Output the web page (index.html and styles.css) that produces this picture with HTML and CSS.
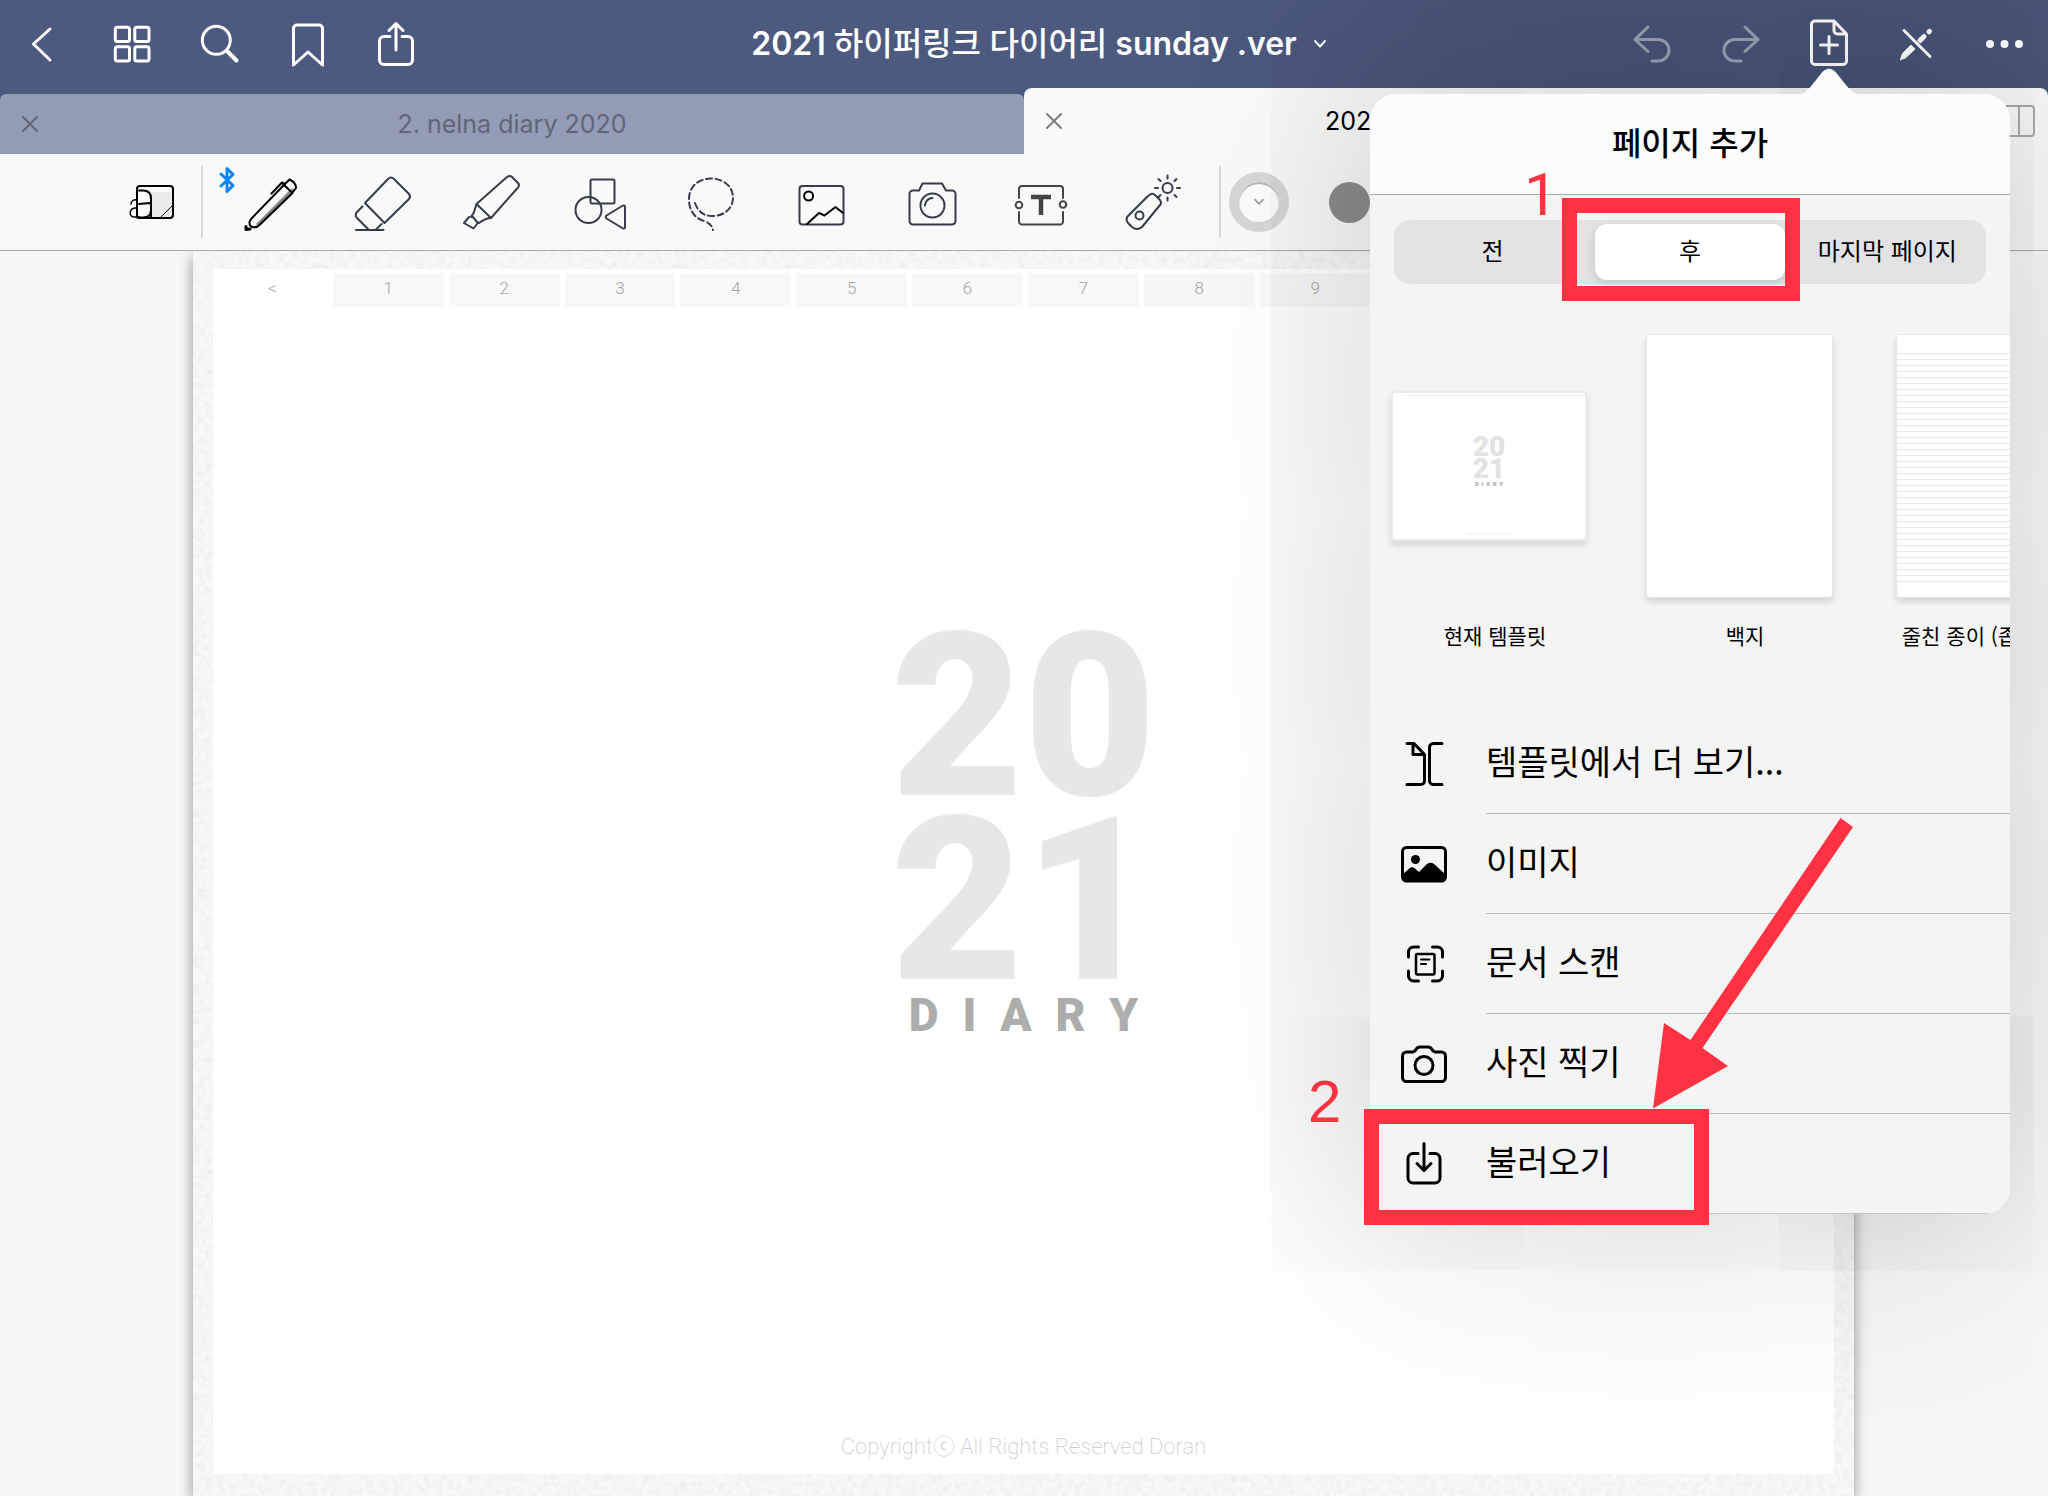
FILE: index.html
```
<!DOCTYPE html>
<html lang="ko">
<head>
<meta charset="utf-8">
<meta name="viewport" content="width=device-width, initial-scale=1">
<title>2021 하이퍼링크 다이어리 sunday .ver</title>
<link rel="stylesheet" href="styles.css">
</head>
<body>
<header class="navbar">
  <div class="nav-group">
    <button class="nav-btn" aria-label="뒤로"><svg viewBox="0 0 56 56"><path d="M34 13 17.500 28 34 44" stroke-width="3"/></svg></button>
    <button class="nav-btn" aria-label="썸네일"><svg viewBox="0 0 56 56"><rect x="11.300" y="11.300" width="14.200" height="14.200" rx="2"/><rect x="30.800" y="11.300" width="14.200" height="14.200" rx="2"/><rect x="11.300" y="30.800" width="14.200" height="14.200" rx="2"/><rect x="30.800" y="30.800" width="14.200" height="14.200" rx="2"/></svg></button>
    <button class="nav-btn" aria-label="검색"><svg viewBox="0 0 56 56"><circle cx="24.300" cy="24.300" r="14"/><path d="M35 35 44.500 44.500" stroke-width="4"/></svg></button>
    <button class="nav-btn" aria-label="북마크"><svg viewBox="0 0 56 56"><path d="M13.500 49V12.500a3.500 3.500 0 0 1 3.500-3.500H39a3.500 3.500 0 0 1 3.500 3.500V49L28 36z"/></svg></button>
    <button class="nav-btn" aria-label="공유"><svg viewBox="0 0 56 56"><path d="M22 20.500H16a4.500 4.500 0 0 0-4.500 4.500V44a4.500 4.500 0 0 0 4.500 4.500H40a4.500 4.500 0 0 0 4.500-4.500V25a4.500 4.500 0 0 0-4.500-4.500H34M28 34V7.500M21 14.500 28 7.500 35 14.500"/></svg></button>
  </div>
  <button class="doc-title"><span>2021 <span class="ko">하이퍼링크 다이어리</span> sunday .ver</span><svg viewBox="0 0 14 10"><path d="M2 2 7 7.500 12 2"/></svg></button>
  <div class="nav-group">
    <button class="nav-btn dim" aria-label="실행 취소"><svg viewBox="0 0 56 56"><path d="M24 11 11 23.500 24 35.500M11 23.500H34a11 10.700 0 0 1 0 21.500H28"/></svg></button>
    <button class="nav-btn dim" aria-label="다시 실행"><svg viewBox="0 0 56 56"><path d="M33 11 46 23.500 33 35.500M46 23.500H23a11 10.700 0 0 0 0 21.500H29"/></svg></button>
    <button class="nav-btn" aria-label="페이지 추가"><svg viewBox="0 0 56 56"><path d="M34 5H15a3.500 3.500 0 0 0-3.500 3.500V45a3.500 3.500 0 0 0 3.500 3.500H43a3.500 3.500 0 0 0 3.500-3.500V18zM34 5.500V14.500a3.500 3.500 0 0 0 3.500 3.500H46M29 20.500V37.500M20.500 29H37.500"/></svg></button>
    <button class="nav-btn" aria-label="읽기 전용"><svg viewBox="0 0 56 56"><path d="M16 14.500 42 40.500" stroke-width="3"/><path d="M32 24.500 36 20.500M41 15.800 41.500 15.300" stroke-width="5"/><path d="M12.500 43.500 14.500 37.500 23 29 27 33 18 41.500z" fill="currentColor" stroke-width="1"/></svg></button>
    <button class="nav-btn" aria-label="더 보기"><svg viewBox="0 0 56 56"><g fill="currentColor" stroke="none"><circle cx="14" cy="28" r="4"/><circle cx="28.500" cy="28" r="4"/><circle cx="43" cy="28" r="4"/></g></svg></button>
  </div>
</header>

<nav class="doc-tabs">
  <div class="doc-tab">
    <button class="tab-close" aria-label="닫기"><svg viewBox="0 0 16 16"><path d="M1 1 15 15M15 1 1 15"/></svg></button>
    <a class="tab-name" href="#">2. nelna diary 2020</a>
  </div>
  <div class="doc-tab active">
    <button class="tab-close" aria-label="닫기"><svg viewBox="0 0 16 16"><path d="M1 1 15 15M15 1 1 15"/></svg></button>
    <a class="tab-name" href="#">2021 하이퍼링크 다이어리 sunday .ver</a>
    <button class="tab-split" aria-label="분할"><svg viewBox="0 0 44 32"><rect x="1" y="1" width="42" height="30" rx="3"/><path d="M28 1V31"/></svg></button>
  </div>
</nav>

<div class="toolbar">
  <button class="tool tool-view ink" aria-label="읽기 모드"><svg viewBox="0 0 64 64"><path d="M30 22H53V48H30z" fill="#ebebeb" stroke="none"/><rect x="17" y="16" width="36" height="32" rx="3"/><path d="M19 20.500H23c5 0 8 3 8 8V40c0 5-3 7.500-8 7.500H17M19 34 30 33M31 28V48"/><path d="M11 34c0-3 3-5 6-4M17 38c-8-1-9 9-3 9h5" stroke-width="1.500"/><path d="M41 47 53 35" stroke-width="1"/></svg></button>
  <span class="divider"></span>
  <div class="tools">
    <button class="tool ink" aria-label="펜"><svg class="bt" viewBox="0 0 14 26"><path d="M1 7 13 18.500 7 24.500V1.500L13 7.500 1 19"/></svg><svg viewBox="0 0 64 64"><path d="M18 54 52 20 56 18 54 24 21 56z" fill="#888" stroke="none"/><path d="M14 48 45 16 51.500 9.500C55 11 58 14 58 18L53.500 24 22 54.500C18 59 11 58 11.500 52Q12 50 14 48zM45 14 54.500 23M33.500 23.500 44 12.500 47 14"/><path d="M8 56.500V59.500L12 59" stroke-width="3"/></svg></button>
    <button class="tool" aria-label="지우개"><svg viewBox="0 0 64 64"><path d="M17 33 40 9Q43 6 46 9L61 24Q63 26.500 61 29L36.500 53z"/><path d="M14.500 36.500 9 42Q6.500 45 9 48L20 59M33.500 54 28 59.500"/><path d="M8 60H35.500"/></svg></button>
    <button class="tool" aria-label="형광펜"><svg viewBox="0 0 64 64"><path d="M17.500 34 48 7Q51 5 53 7L59 13Q61 15 59 17.500L32 48zM17.500 34C16 38 16 42 13.500 44.500L12 47M32 48C27 48 24 50 20 53L17 51M13 46 19 53M10 47 5 53 14.500 58.500 18 54"/></svg></button>
    <button class="tool" aria-label="도형"><svg viewBox="0 0 64 64"><rect x="21.500" y="9.500" width="24" height="24" rx="1.500"/><circle cx="19.500" cy="40" r="13"/><path d="M37.500 45.500 54 35.500Q56 35 56 37V57Q56 59 54 58.500L37.500 48.500Q36 47 37.500 45.500z"/></svg></button>
    <button class="tool" aria-label="올가미"><svg viewBox="0 0 64 64" stroke-dasharray="6 3.500"><path d="M16 33C19 42 25 46 33 46C46 46 54 38 54 27.500C54 17 45 8.500 32 8.500C19 8.500 10 17 10 29C10 40 15 48 25 51Q33 54 34 60"/></svg></button>
    <button class="tool" aria-label="이미지"><svg viewBox="0 0 64 64"><rect x="9.500" y="16" width="44" height="38.500" rx="3"/><g stroke="#000"><circle cx="18.600" cy="26" r="4.500"/><path d="M17 54 29 43 34.500 45.500 45.500 37 53 43"/></g></svg></button>
    <button class="tool" aria-label="카메라"><svg viewBox="0 0 64 64"><path d="M9.500 24a3.500 3.500 0 0 1 3.500-3.500H19L22.500 13.500H42L46 20.500H52a3.500 3.500 0 0 1 3.500 3.500V51a3.500 3.500 0 0 1-3.500 3.500H13a3.500 3.500 0 0 1-3.500-3.500z"/><circle cx="32.500" cy="35.500" r="12"/><path d="M25 35.500a7.500 7.500 0 0 1 7.500-7.500"/></svg></button>
    <button class="tool" aria-label="텍스트"><svg viewBox="0 0 64 64"><g stroke="#444"><path d="M9 28V19a3 3 0 0 1 3-3H50a3 3 0 0 1 3 3V28M53 42V51.500a3 3 0 0 1-3 3H12a3 3 0 0 1-3-3V42"/><circle cx="9" cy="35" r="3.300"/><circle cx="53" cy="34.500" r="3.300"/><path d="M21 27H41M31 27V45" stroke-width="4.500" stroke-linecap="butt"/></g></svg></button>
    <button class="tool" aria-label="레이저 포인터"><svg viewBox="0 0 64 64"><circle cx="46.500" cy="18" r="5"/><path d="M46.500 5.500V8.500M46.500 27.500V30.500M34 18H37M56 18H59M37.500 9 39.500 11M53.500 25 55.500 27M55.500 9 53.500 11M39.500 25 37.500 27M27 26 30 24Q32 23 34 25L39 30Q41 33 39 35L21 57Q16 61 11 57L7 53Q4 49 7 46z"/><circle cx="18.500" cy="45.500" r="4"/></svg></button>
  </div>
  <span class="divider"></span>
  <button class="swatch selected" aria-label="흰색"><svg viewBox="0 0 14 10"><path d="M2 2 7 7.500 12 2"/></svg></button>
  <button class="swatch gray" aria-label="회색"></button>
</div>

<main class="canvas">
  <article class="sheet">
    <svg class="paper-grain" aria-hidden="true"><filter id="grain"><feTurbulence type="fractalNoise" baseFrequency="0.16" numOctaves="4" seed="7"/><feColorMatrix values="0 0 0 0 0.500  0 0 0 0 0.500  0 0 0 0 0.500  0.360 0 0 0 -0.140"/></filter><rect width="100%" height="100%" filter="url(#grain)"/></svg>
    <div class="paper">
      <nav class="months"><a class="prev" href="#">&lt;</a><a href="#">1</a><a href="#">2</a><a href="#">3</a><a href="#">4</a><a href="#">5</a><a href="#">6</a><a href="#">7</a><a href="#">8</a><a href="#">9</a><a href="#">10</a><a href="#">11</a><a href="#">12</a><a href="#">&gt;</a></nav>
      <h1 class="cover"><span class="year">20</span><span class="year">21</span><span class="word"><span>D</span><span>I</span><span>A</span><span>R</span><span>Y</span></span></h1>
      <p class="copyright">Copyrightⓒ All Rights Reserved Doran</p>
    </div>
  </article>
</main>

<section class="popover" aria-label="페이지 추가">
  <svg class="popover-arrow" viewBox="0 0 68 27"><path d="M0 27C10 26 12 23 17 17L27 4.500Q34-3 41 4.500L51 17C56 23 58 26 68 27z"/></svg>
  <div class="popover-body">
    <h2 class="popover-title">페이지 추가</h2>
    <div class="segments" role="radiogroup" aria-label="위치">
      <label class="segment"><input type="radio" name="place"><span>전</span></label>
      <label class="segment"><input type="radio" name="place" checked><span>후</span></label>
      <label class="segment"><input type="radio" name="place"><span>마지막 페이지</span></label>
    </div>
    <div class="templates">
      <a class="template" href="#"><span class="thumb-box"><span class="thumb thumb-cover"><span class="mini-months"></span><span class="mini-year">20</span><span class="mini-year">21</span><span class="mini-word"><span>D</span><span>I</span><span>A</span><span>R</span><span>Y</span></span><span class="mini-foot"></span></span></span><span class="template-name">현재 템플릿</span></a>
      <a class="template" href="#"><span class="thumb-box"><span class="thumb"></span></span><span class="template-name">백지</span></a>
      <a class="template" href="#"><span class="thumb-box"><span class="thumb thumb-lined"></span></span><span class="template-name">줄친 종이 (좁은 간격)</span></a>
    </div>
    <ul class="menu">
      <li><a href="#"><svg viewBox="0 0 48 48"><path d="M7 4.500H14L24.500 15.500V42a3.500 3.500 0 0 1-3.500 3.500H7M13 5V15.500H24M42 4.500H33.500a4 4 0 0 0-4 4V41.500a4 4 0 0 0 4 4H42"/></svg><span>템플릿에서 더 보기...</span></a></li>
      <li><a href="#"><svg viewBox="0 0 48 48"><rect x="2.500" y="8.500" width="43" height="33.500" rx="4"/><circle cx="15.500" cy="20.500" r="4.500" fill="currentColor" stroke="none"/><path d="M3 35 10 29Q12.500 27.500 15 29.500L19 33 27 25Q30.500 22.500 34 25L45 35V39a3 3 0 0 1-3 3H6a3 3 0 0 1-3-3z" fill="currentColor" stroke="none"/></svg><span>이미지</span></a></li>
      <li><a href="#"><svg viewBox="0 0 48 48"><path d="M8.500 18V13a5 5 0 0 1 5-5H18.500M32.500 8H37.500a5 5 0 0 1 5 5V18M42.500 32V37a5 5 0 0 1-5 5H32.500M18.500 42H13.500a5 5 0 0 1-5-5V32"/><rect x="16" y="15" width="18.500" height="20.500" rx="1.500" stroke-width="2.500"/><path d="M21 20.500H29.500M21 25H26" stroke-width="2"/></svg><span>문서 스캔</span></a></li>
      <li><a href="#"><svg viewBox="0 0 48 48"><path d="M2.500 17a4 4 0 0 1 4-4H13Q15 12.500 16 10.500 17.500 8 20 8H28Q30.500 8 32 10.500 33 12.500 35 13H41.500a4 4 0 0 1 4 4V38.500a4 4 0 0 1-4 4H6.500a4 4 0 0 1-4-4z"/><circle cx="24" cy="26.500" r="9"/></svg><span>사진 찍기</span></a></li>
      <li><a href="#"><svg viewBox="0 0 48 48"><path d="M18 14.500H13a5 5 0 0 0-5 5V39a5 5 0 0 0 5 5H35a5 5 0 0 0 5-5V19.500a5 5 0 0 0-5-5H30M24 4.500V31M17 24.500 24 31.500 31 24.500"/></svg><span>불러오기</span></a></li>
    </ul>
  </div>
  <span class="mark-box mark-box-1"></span>
  <span class="mark-num mark-num-1">1</span>
  <span class="mark-box mark-box-2"></span>
  <span class="mark-num mark-num-2">2</span>
  <svg class="mark-arrow" viewBox="0 0 201 291"><path d="M187.500 0 200 9 49.500 230 75 248 0 290.500 11 205 37.500 222z"/></svg>
</section>
</body>
</html>
```
FILE: styles.css
```
* { box-sizing: border-box; }

body {
  margin: 0;
  height: 100vh;
  position: relative;
  overflow: hidden;
  display: flex;
  flex-direction: column;
  background: #f7f7f7;
  color: #000;
  font-family: Inter, "Noto Sans CJK KR", sans-serif;
}

button {
  border: 0;
  padding: 0;
  background: none;
  color: inherit;
  font: inherit;
}

a { color: inherit; text-decoration: none; }

svg {
  display: block;
  flex: none;
  fill: none;
  stroke: currentColor;
  stroke-width: 2;
  stroke-linecap: round;
  stroke-linejoin: round;
  overflow: visible;
}

/* Title bar */
.navbar {
  flex: none;
  height: 88px;
  display: flex;
  align-items: center;
  justify-content: space-between;
  background: linear-gradient(90deg, #4d5a80 55%, #475477 75%);
  color: #fff;
}
.nav-group { display: flex; }
.nav-btn { width: 88px; height: 88px; display: flex; align-items: center; justify-content: center; }
.nav-btn svg { width: 56px; height: 56px; stroke-width: 3; }
.nav-btn.dim { opacity: .45; }
.doc-title {
  display: flex;
  align-items: center;
  gap: 16px;
  padding-left: 30px;
  font-size: 32px;
  font-weight: 600;
  line-height: 44px;
}
.doc-title .ko { font-weight: 500; }
.doc-title svg { width: 14px; height: 10px; }

/* Document tabs */
.doc-tabs {
  flex: none;
  display: grid;
  grid-template-columns: 1fr 1fr;
  align-items: end;
  height: 66px;
  background: linear-gradient(90deg, #4d5a80 55%, #475477 75%);
}
.doc-tab {
  height: 60px;
  display: flex;
  align-items: center;
  padding: 0 38px 0 22px;
  background: #939cb5;
  color: #5f6676;
  border-radius: 6px 6px 0 0;
  position: relative;
}
.doc-tab.active { height: 66px; background: #f9f9f9; color: #000; border-radius: 8px 8px 0 0; }
.tab-close svg { width: 16px; height: 16px; }
.active .tab-close { color: #7d7d7d; }
.tab-name { flex: 1; text-align: center; font-size: 25px; line-height: 32px; white-space: nowrap; }
.tab-split { position: absolute; right: 13px; top: 17px; color: #a9a9a9; }
.tab-split svg { width: 44px; height: 32px; }

/* Tool strip */
.toolbar {
  flex: none;
  height: 97px;
  display: flex;
  align-items: center;
  padding-left: 102px;
  background: #f9f9f9;
  border-bottom: 1px solid #a9a9a9;
}
.tool { display: flex; justify-content: center; color: #363c49; position: relative; }
.tool.ink { color: #000; }
.tool svg { width: 64px; height: 64px; }
.tool-view { width: 99px; }
.tools { width: 993px; display: grid; grid-template-columns: repeat(9, 1fr); margin: 0 11px 0 12px; }
.tool svg.bt { position: absolute; left: 5px; top: -3px; width: 14px; height: 26px; stroke: #0a84ff; stroke-width: 3; }
.divider { width: 2px; height: 72px; background: #dadada; }
.swatch {
  width: 60px;
  height: 60px;
  margin-left: 8px;
  display: flex;
  align-items: center;
  justify-content: center;
  border-radius: 50%;
}
.swatch.selected { border: 10px solid #d6d6d8; background: #fbfbfb; color: #9a9a9a; box-shadow: inset 0 2px 1px #b0b0b0; }
.swatch.selected svg { width: 12px; height: 8px; }
.swatch.gray { width: 41px; height: 41px; margin-left: 40px; background: #8c8c8a; }

/* Notebook page */
.canvas { flex: 1; min-height: 0; display: flex; padding: 0 194px 0 193px; overflow: hidden; }
.sheet {
  flex: 1;
  display: flex;
  position: relative;
  padding: 18px 20px 22px;
  background: #f8f8f8;
  box-shadow: 0 6px 14px rgba(0, 0, 0, .4);
}
.paper-grain { position: absolute; inset: 0; width: 100%; height: 100%; stroke: none; overflow: hidden; }
.paper {
  flex: 1;
  position: relative;
  display: flex;
  flex-direction: column;
  align-items: center;
  background: #fff;
  font-family: Roboto, "Noto Sans CJK KR", sans-serif;
}
.months {
  align-self: stretch;
  display: grid;
  grid-template-columns: repeat(14, 1fr);
  gap: 5px;
  padding: 4px 0 0 4px;
  font-size: 17px;
  font-weight: 300;
  line-height: 30px;
  text-align: center;
  color: #a4a4a4;
}
.months a { height: 34px; background: #f8f8f8; }
.months .prev { background: none; }
.cover {
  flex: 1;
  margin: 0;
  padding-top: 318px;
  display: flex;
  flex-direction: column;
  font-weight: 900;
  color: #e7e7e7;
}
.year { font-size: 229px; line-height: 184px; }
.word { display: flex; justify-content: space-between; padding: 0 18px; font-size: 46px; line-height: 44px; color: #adadad; }
.copyright { margin: 0; padding-bottom: 12px; font-size: 22px; line-height: 30px; font-weight: 200; color: #cfcfcf; }

/* Add-page popover */
.popover {
  position: absolute;
  top: 94px;
  right: 38px;
  width: 640px;
  border-radius: 26px;
  box-shadow: 0 0 240px rgba(0, 0, 0, .24);
  font-family: "Noto Sans CJK KR", sans-serif;
}
.popover-arrow { position: absolute; left: 425px; top: -26px; width: 68px; height: 27px; fill: #fcfcfd; stroke: none; }
.popover-body { border-radius: 26px; overflow: hidden; background: #f4f4f5; }
.popover-title {
  margin: 0;
  height: 101px;
  border-bottom: 1px solid #a9a9ab;
  background: #fcfcfd;
  text-align: center;
  font-size: 32px;
  font-weight: 500;
  line-height: 94px;
}
.segments {
  display: grid;
  grid-template-columns: repeat(3, 1fr);
  height: 64px;
  margin: 25px 24px 0;
  border-radius: 16px;
  background: #e3e3e5;
}
.segment { position: relative; display: flex; }
.segment input { position: absolute; opacity: 0; margin: 0; }
.segment span { flex: 1; margin: 4px; border-radius: 12px; text-align: center; font-size: 24px; line-height: 52px; }
.segment input:checked + span { background: #fff; box-shadow: 0 4px 12px rgba(0, 0, 0, .14); }

.templates { display: grid; grid-template-columns: repeat(3, 250px); margin-top: 50px; overflow: hidden; }
.template { display: flex; flex-direction: column; text-align: center; }
.thumb-box { display: flex; align-items: center; justify-content: center; height: 264px; padding-right: 12px; }
.thumb {
  width: 187px;
  height: 264px;
  border: 1px solid #e6e6e6;
  border-radius: 4px;
  background: #fff;
  box-shadow: 0 4px 6px rgba(0, 0, 0, .13);
}
.thumb-lined {
  background: repeating-linear-gradient(#e9e9eb 0 1px, #fff 1px 6px) 0 18px / 100% 234px no-repeat, #fff;
}
.thumb-cover {
  width: 196px;
  height: 150px;
  border: 2px solid #ebebeb;
  display: flex;
  flex-direction: column;
  align-items: center;
  font-family: Roboto, sans-serif;
  font-weight: 900;
  color: #e2e2e2;
}
.mini-months { align-self: stretch; height: 4px; margin: 1px 2px 38px 14px; background: #f6f6f6; }
.mini-year { font-size: 28px; line-height: 22px; }
.mini-word { width: 28px; display: flex; justify-content: space-between; font-size: 6px; line-height: 8px; color: #adadad; }
.mini-foot { width: 44px; height: 2px; margin-top: auto; margin-bottom: 4px; background: #f5f5f5; }
.template-name { margin-top: 22px; font-size: 21px; line-height: 30px; white-space: nowrap; }

.menu { list-style: none; margin: 64px 0 0; padding: 0; }
.menu a { display: flex; align-items: center; gap: 38px; padding-left: 30px; height: 100px; }
.menu svg { width: 48px; height: 48px; margin-bottom: 2px; stroke-width: 3; }
.menu span {
  flex: 1;
  height: 100px;
  border-bottom: 1px solid #bcbcc0;
  font-size: 34px;
  line-height: 94px;
}
.menu li:last-child a { border-bottom: 1px solid #c4c4c8; }
.menu li:last-child span { border-bottom: 0; }

/* Tutorial marks drawn over the popover */
.mark-box { position: absolute; border: 15px solid #ff3242; }
.mark-box-1 { left: 192px; top: 104px; width: 238px; height: 103px; }
.mark-box-2 { left: -6px; top: 1015px; width: 345px; height: 116px; }
.mark-num { position: absolute; font: 60px/60px "Liberation Sans", sans-serif; color: #ff3242; }
.mark-num-1 { left: 154px; top: 71px; font-family: Roboto, sans-serif; }
.mark-num-2 { left: -62px; top: 978px; }
.mark-arrow { position: absolute; left: 283px; top: 724px; width: 201px; height: 291px; fill: #ff3242; stroke: none; }
```
